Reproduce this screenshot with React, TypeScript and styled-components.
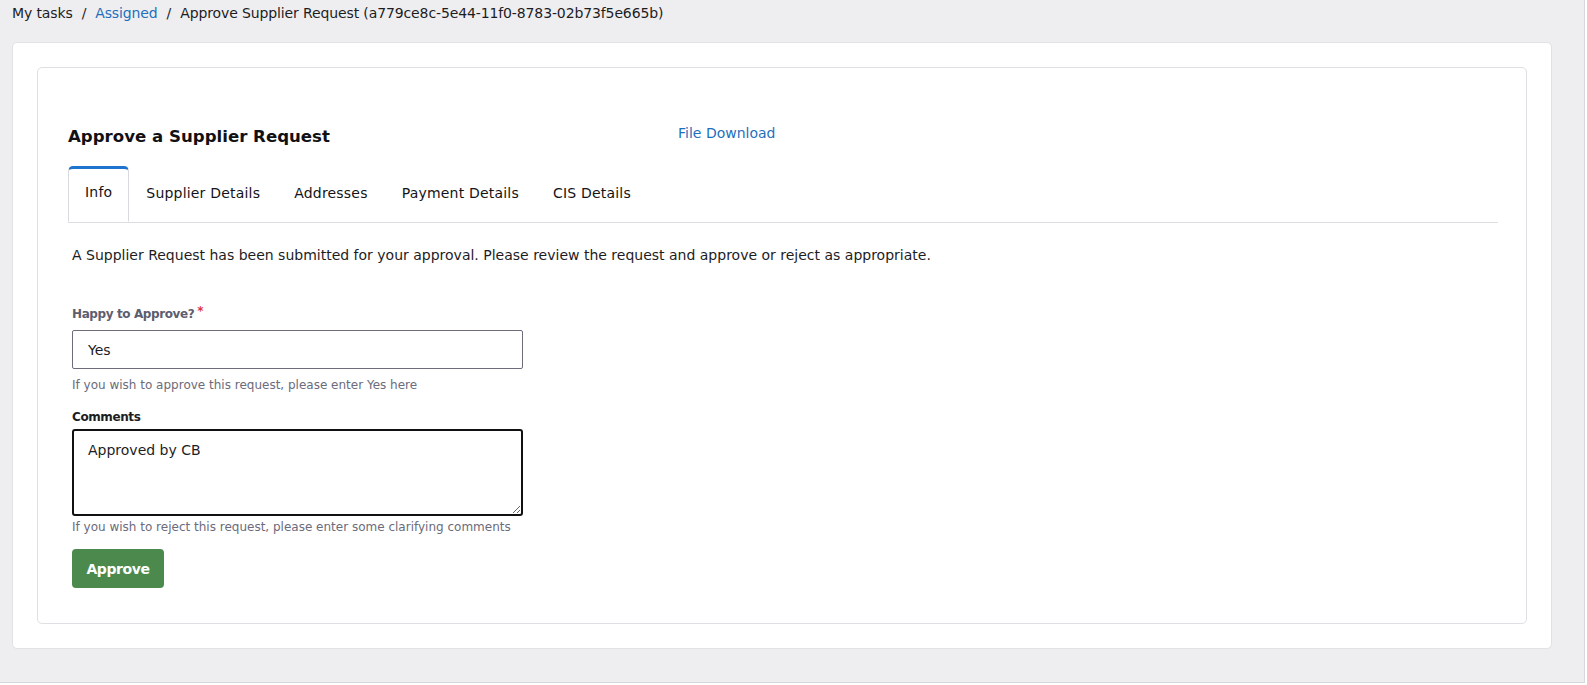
import React, { useEffect, useRef } from "react";
import styled, { createGlobalStyle } from "styled-components";

const FONT = `"DejaVu Sans", "Open Sans", sans-serif`;

const GlobalStyle = createGlobalStyle`
  html, body {
    margin: 0;
    padding: 0;
    background: #ffffff;
  }
  body {
    font-family: ${FONT};
    color: #1d1d1f;
  }
  * { box-sizing: border-box; }
`;

const Frame = styled.div`
  width: 1585px;
  height: 683px;
  background: #eeeef1;
  border-right: 1px solid #d7d7dd;
  border-bottom: 1px solid #d7d7dd;
  display: flex;
  flex-direction: column;
`;

const Breadcrumb = styled.nav`
  height: 42px;
  padding: 4px 12px 0;
  font-size: 14px;
  line-height: 18px;
  letter-spacing: -0.12px;
  color: #1d1d1f;
  display: flex;
  gap: 9px;
`;

const Crumb = styled.span<{ $link?: boolean }>`
  color: ${p => (p.$link ? "#1f6fbd" : "#1d1d1f")};
`;

const OuterCard = styled.section`
  margin: 0 32px 0 12px;
  height: 607px;
  background: #ffffff;
  border: 1px solid #e1e1e6;
  border-radius: 5px;
  padding: 24px;
`;

const InnerCard = styled.div`
  height: 100%;
  border: 1px solid #dfdfe4;
  border-radius: 5px;
  padding: 57px 28px 0 30px;
`;

const Header = styled.div`
  display: flex;
  align-items: flex-start;
`;

const Title = styled.h2`
  margin: 0;
  width: 610px;
  font-size: 16.6px;
  line-height: 24px;
  font-weight: 700;
  color: #111114;
`;

const Link = styled.a`
  margin-top: -1px;
  font-size: 14px;
  line-height: 18px;
  color: #1f6fbd;
  text-decoration: none;
`;

const TabList = styled.div`
  margin-top: 17px;
  display: flex;
  border-bottom: 1px solid #dcdce1;
`;

const Tab = styled.div<{ $active?: boolean }>`
  height: 56px;
  margin-bottom: ${p => (p.$active ? "-1px" : "0")};
  padding: 0 16px 6px;
  display: flex;
  align-items: center;
  font-size: 14px;
  font-weight: 500;
  letter-spacing: 0.2px;
  color: #141416;
  border: 1px solid ${p => (p.$active ? "#d9d9de" : "transparent")};
  border-top: 3px solid ${p => (p.$active ? "#1f74d0" : "transparent")};
  border-bottom: ${p => (p.$active ? "1px solid #ffffff" : "none")};
  border-radius: 5px 5px 0 0;
  background: ${p => (p.$active ? "#ffffff" : "transparent")};
`;

const Panel = styled.div`
  padding: 22px 0 0 4px;
`;

const Intro = styled.p`
  margin: 0;
  font-size: 14px;
  line-height: 20px;
`;

const Field = styled.div<{ $top: number }>`
  margin-top: ${p => p.$top}px;
  display: flex;
  flex-direction: column;
  width: 451px;
`;

const Label = styled.label<{ $muted?: boolean }>`
  font-size: 12px;
  line-height: 16px;
  font-weight: 700;
  letter-spacing: -0.4px;
  color: ${p => (p.$muted ? "#5d5d6f" : "#1d1d1f")};
`;

const Required = styled.span`
  color: #d93848;
  margin-left: 3px;
  position: relative;
  top: -3px;
`;

const TextInput = styled.input`
  margin-top: 8px;
  height: 39px;
  width: 100%;
  padding: 0 15px;
  font-family: ${FONT};
  font-size: 14px;
  color: #1d1d1f;
  border: 1px solid #6c6c7a;
  border-radius: 2px;
  outline: none;
`;

const TextBox = styled.textarea`
  margin-top: 4px;
  height: 87px;
  width: 100%;
  padding: 9px 14px;
  font-family: ${FONT};
  font-size: 14px;
  line-height: 20px;
  color: #1d1d1f;
  caret-color: #111114;
  border: 2px solid #111114;
  border-radius: 3px;
  outline: none;
  resize: vertical;
`;

const Help = styled.span<{ $top: number }>`
  margin-top: ${p => p.$top}px;
  font-size: 12px;
  line-height: 16px;
  color: #6b6b7b;
`;

const ApproveButton = styled.button`
  margin-top: 14px;
  height: 39px;
  width: 92px;
  border: none;
  border-radius: 4px;
  background: #4b8a4c;
  color: #ffffff;
  font-family: ${FONT};
  font-size: 14px;
  font-weight: 700;
  letter-spacing: -0.4px;
  cursor: pointer;
`;

const tabs = ["Info", "Supplier Details", "Addresses", "Payment Details", "CIS Details"];

export default function App() {
  const commentRef = useRef<HTMLTextAreaElement>(null);

  useEffect(() => {
    const el = commentRef.current;
    if (el) {
      el.focus();
      el.setSelectionRange(el.value.length, el.value.length);
    }
  }, []);

  return (
    <>
      <GlobalStyle />
      <Frame>
        <Breadcrumb>
          <Crumb>My tasks</Crumb>
          <Crumb>/</Crumb>
          <Crumb $link>Assigned</Crumb>
          <Crumb>/</Crumb>
          <Crumb>Approve Supplier Request (a779ce8c-5e44-11f0-8783-02b73f5e665b)</Crumb>
        </Breadcrumb>
        <OuterCard>
          <InnerCard>
            <Header>
              <Title>Approve a Supplier Request</Title>
              <Link href="#">File Download</Link>
            </Header>
            <TabList>
              {tabs.map((t, i) => (
                <Tab key={t} $active={i === 0}>
                  {t}
                </Tab>
              ))}
            </TabList>
            <Panel>
              <Intro>
                A Supplier Request has been submitted for your approval. Please review the request and approve or
                reject as appropriate.
              </Intro>
              <Field $top={41}>
                <Label $muted>
                  Happy to Approve?<Required>*</Required>
                </Label>
                <TextInput defaultValue="Yes" />
                <Help $top={8}>If you wish to approve this request, please enter Yes here</Help>
              </Field>
              <Field $top={16}>
                <Label>Comments</Label>
                <TextBox ref={commentRef} defaultValue="Approved by CB" />
                <Help $top={3}>If you wish to reject this request, please enter some clarifying comments</Help>
              </Field>
              <ApproveButton>Approve</ApproveButton>
            </Panel>
          </InnerCard>
        </OuterCard>
      </Frame>
    </>
  );
}
